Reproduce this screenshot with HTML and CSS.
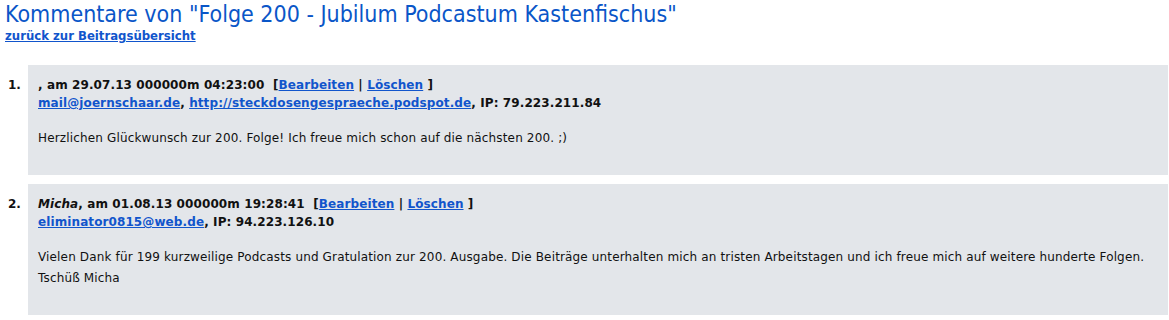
FILE: index.html
```html
<!DOCTYPE html>
<html lang="de">
<head>
    <meta charset="UTF-8">
    <title>Kommentare</title>
    <link rel="stylesheet" href="styles.css">
</head>
<body>
    <h1 class="title">Kommentare von "Folge 200 - Jubilum Podcastum Kastenfischus"</h1>
    <a class="back" href="#">zurück zur Beitragsübersicht</a>

    <div class="comments">
        <div class="comment">
            <div class="num">1.</div>
            <div class="box">
                <div class="meta">
                    <div>, am 29.07.13 000000m 04:23:00&nbsp; [<a href="#">Bearbeiten</a> | <a href="#">Löschen</a> ]</div>
                    <div><a href="#">mail@joernschaar.de</a>, <a href="#">http://steckdosengespraeche.podspot.de</a>, IP: 79.223.211.84</div>
                </div>
                <p class="text">Herzlichen Glückwunsch zur 200. Folge! Ich freue mich schon auf die nächsten 200. ;)</p>
            </div>
        </div>

        <div class="comment">
            <div class="num">2.</div>
            <div class="box">
                <div class="meta">
                    <div><i>Micha</i>, am 01.08.13 000000m 19:28:41&nbsp; [<a href="#">Bearbeiten</a> | <a href="#">Löschen</a> ]</div>
                    <div><a href="#">eliminator0815@web.de</a>, IP: 94.223.126.10</div>
                </div>
                <p class="text">Vielen Dank für 199 kurzweilige Podcasts und Gratulation zur 200. Ausgabe. Die Beiträge unterhalten mich an tristen Arbeitstagen und ich freue mich auf weitere hunderte Folgen.<br>Tschüß Micha</p>
            </div>
        </div>
    </div>
</body>
</html>
```

FILE: styles.css
```css
body {
    margin: 0;
    padding: 0 1px 0 5px;
    font-family: "DejaVu Sans", Verdana, sans-serif;
    font-size: 12px;
    color: #111;
    background: #fff;
}

a {
    color: #1155cc;
}

.title {
    margin: 0;
    padding-top: 1px;
    font-family: "DejaVu Sans Condensed", "DejaVu Sans", sans-serif;
    font-size: 23px;
    font-weight: normal;
    line-height: 26px;
    color: #0a56c8;
}

.back {
    display: inline-block;
    font-family: "DejaVu Sans Condensed", "DejaVu Sans", sans-serif;
    font-size: 13px;
    font-weight: bold;
    line-height: 18px;
}

.comments {
    margin-top: 20px;
    display: flex;
    flex-direction: column;
    gap: 9px;
}

.comment {
    display: flex;
}

.num {
    width: 20px;
    padding: 11px 0 0 3px;
    font-weight: bold;
    line-height: 18px;
}

.box {
    flex: 1;
    background: #e3e6ea;
    padding: 11px 10px 26px 10px;
}

.meta {
    font-weight: bold;
    line-height: 18px;
    letter-spacing: 0.1px;
}

.text {
    margin: 16px 0 0 0;
    line-height: 21px;
    letter-spacing: 0.15px;
}
```
